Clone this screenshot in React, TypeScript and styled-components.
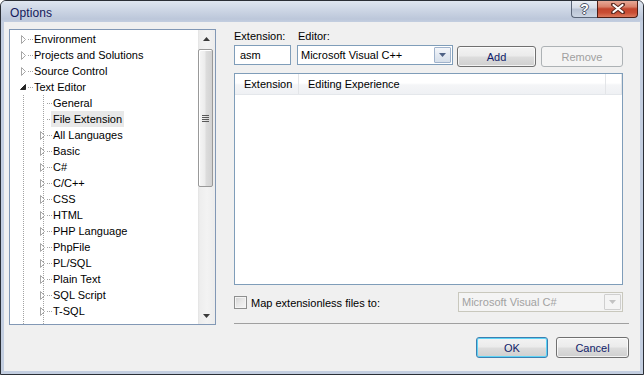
import React from 'react';
import styled, { createGlobalStyle, css } from 'styled-components';

const GlobalStyle = createGlobalStyle`
  html, body {
    margin: 0;
    padding: 0;
    background: #ffffff;
  }
  body {
    font-family: 'Liberation Sans', Arial, sans-serif;
    font-size: 11px;
    color: #000;
  }
`;

const Window = styled.div`
  width: 644px;
  height: 375px;
  box-sizing: border-box;
  border: 1px solid #2b2f36;
  border-radius: 6px 6px 0 0;
  background: #c3cee0;
  display: flex;
  flex-direction: column;
  overflow: hidden;
`;

const TitleBar = styled.div`
  height: 21px;
  display: flex;
  align-items: flex-start;
  background: linear-gradient(to bottom, #dfe6f0 0, #cdd6e5 9px, #bcc7da 18px, #c3cee0 21px);
`;

const Title = styled.span`
  padding: 5px 0 0 9px;
  font-size: 12px;
  color: #14195a;
  letter-spacing: 0.1px;
`;

const CaptionButtons = styled.div`
  margin-left: auto;
  margin-right: 5px;
  margin-top: -1px;
  display: flex;
`;

const HelpButton = styled.div`
  width: 26px;
  height: 18px;
  box-sizing: border-box;
  border: 1px solid #5a6577;
  border-top: none;
  border-right: none;
  border-radius: 0 0 0 4px;
  background: linear-gradient(to bottom, #eef1f6 0, #d6dce7 45%, #b9c3d4 55%, #ccd5e3 100%);
  display: flex;
  align-items: center;
  justify-content: center;
  font: bold 14px 'Liberation Sans', Arial, sans-serif;
  color: #ffffff;
  text-shadow: -1px 0 #4d5566, 1px 0 #4d5566, 0 -1px #4d5566, 0 1px #4d5566;
`;

const CloseButton = styled.div`
  width: 41px;
  height: 18px;
  box-sizing: border-box;
  border: 1px solid #4e1d14;
  border-top: none;
  border-radius: 0 0 4px 0;
  background: linear-gradient(to bottom, #e9b09f 0, #d9816a 40%, #c2452d 52%, #c94d34 75%, #dc7a5e 100%);
  display: flex;
  align-items: center;
  justify-content: center;
`;

const Body = styled.div`
  flex: 1;
  margin: 0 3px 3px 3px;
  background: #f0f0f0;
  display: flex;
  align-items: flex-start;
  padding: 7px 0 0 5px;
`;

/* ---------- tree ---------- */

const TreePanel = styled.div`
  width: 207px;
  height: 296px;
  box-sizing: border-box;
  border: 1px solid #8298b5;
  background: #ffffff;
  display: flex;
`;

const TreeList = styled.div`
  flex: 1;
  display: flex;
  flex-direction: column;
  padding-top: 1px;
  overflow: hidden;
`;

const dots = 'repeating-linear-gradient(to bottom, #a3a3a3 0 1px, transparent 1px 2px)';

const guideLines = css`
  background-image: ${dots}, ${dots};
  background-size: 1px 100%, 1px 100%;
  background-position: 13px 0, 33px 0;
  background-repeat: no-repeat;
`;

const TreeRow = styled.div<{ $level: number }>`
  height: 16px;
  flex-shrink: 0;
  display: flex;
  align-items: center;
  padding-left: ${(p) => (p.$level === 1 ? 11 : 30)}px;
  white-space: nowrap;
  ${(p) => p.$level === 2 && guideLines}
`;

const GuideFill = styled.div`
  flex: 1;
  ${guideLines}
`;

const ExpanderSlot = styled.span<{ $leaf?: boolean }>`
  width: 5px;
  height: 9px;
  margin-right: 1px;
  display: flex;
  align-items: center;
  justify-content: flex-start;
  ${(p) =>
    p.$leaf &&
    css`
      background: repeating-linear-gradient(to right, #a3a3a3 0 1px, transparent 1px 2px) 3px 4px / 3px 1px no-repeat;
    `}
`;

const Connector = styled.span`
  width: 6px;
  height: 1px;
  margin-right: 1px;
  background: repeating-linear-gradient(to right, transparent 0 1px, #a3a3a3 1px 2px);
`;

const NodeLabel = styled.span<{ $selected?: boolean }>`
  height: 16px;
  line-height: 16px;
  padding: 0 2px;
  margin-left: -2px;
  background: ${(p) => (p.$selected ? '#e8e8e8' : 'transparent')};
`;

const ScrollBar = styled.div`
  width: 17px;
  display: flex;
  flex-direction: column;
  background: linear-gradient(to right, #e3e3e3 0, #eeeeee 2px, #f3f3f3 9px, #ececec 100%);
`;

const ScrollArrow = styled.div`
  height: 17px;
  flex-shrink: 0;
  display: flex;
  align-items: center;
  justify-content: center;
`;

const ScrollTrack = styled.div`
  flex: 1;
  display: flex;
  flex-direction: column;
`;

const Thumb = styled.div`
  margin: 2px 2px 0 0;
  height: 138px;
  box-sizing: border-box;
  border: 1px solid #999999;
  border-radius: 2px;
  background: linear-gradient(to right, #f6f6f6 0, #ececec 45%, #dcdcdc 55%, #d2d2d2 100%);
  box-shadow: inset 1px 1px 0 #ffffff;
  display: flex;
  align-items: center;
  justify-content: center;
`;

/* ---------- right side ---------- */

const RightColumn = styled.div`
  margin-left: 18px;
  margin-top: -1px;
  width: 395px;
  display: flex;
  flex-direction: column;
`;

const LabelRow = styled.div`
  height: 16px;
  display: flex;
  align-items: center;
`;

const FieldLabel = styled.span<{ $width?: number }>`
  width: ${(p) => (p.$width ? `${p.$width}px` : 'auto')};
`;

const FieldRow = styled.div`
  margin-top: 1px;
  height: 22px;
  display: flex;
  align-items: flex-start;
`;

const TextBox = styled.div`
  width: 57px;
  height: 20px;
  box-sizing: border-box;
  border: 1px solid #7f9db9;
  background: #ffffff;
  padding-left: 5px;
  display: flex;
  align-items: center;
`;

const Combo = styled.div<{ $disabled?: boolean; $width: number }>`
  width: ${(p) => p.$width}px;
  height: 20px;
  box-sizing: border-box;
  border: 1px solid ${(p) => (p.$disabled ? '#c9c8bd' : '#7f9db9')};
  background: ${(p) => (p.$disabled ? '#f4f4f4' : '#ffffff')};
  color: ${(p) => (p.$disabled ? '#a2a2a2' : '#000000')};
  display: flex;
  align-items: center;
  padding-left: 3px;
`;

const DropButton = styled.span<{ $disabled?: boolean }>`
  margin-left: auto;
  margin-right: 1px;
  width: 17px;
  height: 16px;
  box-sizing: border-box;
  border: 1px solid ${(p) => (p.$disabled ? '#cfcfcf' : '#9fb2cb')};
  border-radius: 1px;
  background: ${(p) =>
    p.$disabled ? '#f4f4f4' : 'linear-gradient(to bottom, #f4f6fa 0, #e3e9f1 50%, #d6dfea 100%)'};
  display: flex;
  align-items: center;
  justify-content: center;
`;

const PushButton = styled.button<{ $focused?: boolean; $width: number }>`
  width: ${(p) => p.$width}px;
  height: 21px;
  box-sizing: border-box;
  padding: 0;
  border-radius: 3px;
  font: 11px 'Liberation Sans', Arial, sans-serif;
  border: 1px solid ${(p) => (p.$focused ? '#3c7fb1' : '#707070')};
  color: #101c6a;
  background: linear-gradient(to bottom, #f3f3f3 0, #ebebeb 48%, #dddddd 52%, #cfcfcf 100%);
  box-shadow: inset 0 0 0 1px ${(p) => (p.$focused ? '#5ed4f6' : 'rgba(255,255,255,0.75)')};

  &:disabled {
    border-color: #adb2b5;
    background: #f4f4f4;
    box-shadow: none;
    color: #a0a0a0;
  }
`;

const ListView = styled.div`
  margin-top: 6px;
  width: 389px;
  height: 212px;
  box-sizing: border-box;
  border: 1px solid #7f9db9;
  background: #ffffff;
`;

const ListHeader = styled.div`
  height: 21px;
  display: flex;
  background: linear-gradient(to bottom, #ffffff 0, #ffffff 45%, #f4f5f7 55%, #eff1f4 100%);
  border-bottom: 1px solid #e4e7eb;
  box-sizing: border-box;
`;

const HeaderCell = styled.div<{ $width?: number }>`
  width: ${(p) => (p.$width ? `${p.$width}px` : 'auto')};
  flex: ${(p) => (p.$width ? '0 0 auto' : '1')};
  box-sizing: border-box;
  padding-left: 9px;
  display: flex;
  align-items: center;
  border-right: 1px solid #e3e5e8;
`;

const CheckRow = styled.div`
  margin-top: 7px;
  width: 389px;
  height: 20px;
  display: flex;
  align-items: center;
  justify-content: space-between;
`;

const CheckLabel = styled.label`
  display: flex;
  align-items: center;
  gap: 4px;
  margin-top: 1px;
`;

const CheckBox = styled.span`
  width: 13px;
  height: 13px;
  box-sizing: border-box;
  border: 1px solid #8e8f8f;
  background: linear-gradient(135deg, #d2d2d2 0, #e8e8e8 50%, #f6f6f6 100%);
  box-shadow: inset 0 0 0 1px #f4f4f4;
`;

const Separator = styled.div`
  margin-top: 11px;
  height: 1px;
  background: #a0a0a0;
`;

const ButtonRow = styled.div`
  margin-top: 13px;
  display: flex;
  justify-content: flex-end;
  gap: 8px;
`;

/* ---------- icons ---------- */

const Collapsed = () => (
  <svg width="5" height="9" viewBox="0 0 5 9">
    <path d="M0.5 0.5 L4.5 4.5 L0.5 8.5 Z" fill="#ffffff" stroke="#a6a6a6" />
  </svg>
);

const Expanded = () => (
  <svg width="6" height="6" viewBox="0 0 6 6" style={{ marginLeft: -1 }}>
    <path d="M5.5 0.5 V5.5 H0.5 Z" fill="#262626" stroke="#262626" />
  </svg>
);

const SmallArrow = ({ up, color }: { up?: boolean; color: string }) => (
  <svg width="7" height="4" viewBox="0 0 7 4">
    <path d={up ? 'M0 4 L3.5 0 L7 4 Z' : 'M0 0 L7 0 L3.5 4 Z'} fill={color} />
  </svg>
);

const Grip = () => (
  <svg width="7" height="7" viewBox="0 0 7 7">
    <path d="M0 0.5 H7 M0 2.5 H7 M0 4.5 H7 M0 6.5 H7" stroke="#5a5a5a" strokeWidth="1" />
  </svg>
);

const CloseGlyph = () => (
  <svg width="14" height="11" viewBox="0 0 14 11">
    <path d="M2 1.5 L12 9.5 M12 1.5 L2 9.5" stroke="#5b2a22" strokeWidth="4" strokeLinecap="round" />
    <path d="M2.5 2 L11.5 9 M11.5 2 L2.5 9" stroke="#ffffff" strokeWidth="2.2" strokeLinecap="round" />
  </svg>
);

/* ---------- data ---------- */

type Node = {
  label: string;
  level: 1 | 2;
  state: 'collapsed' | 'expanded' | 'leaf';
  selected?: boolean;
};

const nodes: Node[] = [
  { label: 'Environment', level: 1, state: 'collapsed' },
  { label: 'Projects and Solutions', level: 1, state: 'collapsed' },
  { label: 'Source Control', level: 1, state: 'collapsed' },
  { label: 'Text Editor', level: 1, state: 'expanded' },
  { label: 'General', level: 2, state: 'leaf' },
  { label: 'File Extension', level: 2, state: 'leaf', selected: true },
  { label: 'All Languages', level: 2, state: 'collapsed' },
  { label: 'Basic', level: 2, state: 'collapsed' },
  { label: 'C#', level: 2, state: 'collapsed' },
  { label: 'C/C++', level: 2, state: 'collapsed' },
  { label: 'CSS', level: 2, state: 'collapsed' },
  { label: 'HTML', level: 2, state: 'collapsed' },
  { label: 'PHP Language', level: 2, state: 'collapsed' },
  { label: 'PhpFile', level: 2, state: 'collapsed' },
  { label: 'PL/SQL', level: 2, state: 'collapsed' },
  { label: 'Plain Text', level: 2, state: 'collapsed' },
  { label: 'SQL Script', level: 2, state: 'collapsed' },
  { label: 'T-SQL', level: 2, state: 'collapsed' },
];

const App: React.FC = () => (
  <>
    <GlobalStyle />
    <Window>
      <TitleBar>
        <Title>Options</Title>
        <CaptionButtons>
          <HelpButton>?</HelpButton>
          <CloseButton>
            <CloseGlyph />
          </CloseButton>
        </CaptionButtons>
      </TitleBar>
      <Body>
        <TreePanel>
          <TreeList>
            {nodes.map((n) => (
              <TreeRow key={n.label} $level={n.level}>
                <ExpanderSlot $leaf={n.state === 'leaf'}>
                  {n.state === 'collapsed' && <Collapsed />}
                  {n.state === 'expanded' && <Expanded />}
                </ExpanderSlot>
                <Connector />
                <NodeLabel $selected={n.selected}>{n.label}</NodeLabel>
              </TreeRow>
            ))}
            <GuideFill />
          </TreeList>
          <ScrollBar>
            <ScrollArrow>
              <SmallArrow up color="#3a3a3a" />
            </ScrollArrow>
            <ScrollTrack>
              <Thumb>
                <Grip />
              </Thumb>
            </ScrollTrack>
            <ScrollArrow>
              <SmallArrow color="#3a3a3a" />
            </ScrollArrow>
          </ScrollBar>
        </TreePanel>

        <RightColumn>
          <LabelRow>
            <FieldLabel $width={64}>Extension:</FieldLabel>
            <FieldLabel>Editor:</FieldLabel>
          </LabelRow>
          <FieldRow>
            <TextBox>asm</TextBox>
            <Combo $width={156} style={{ marginLeft: 6 }}>
              Microsoft Visual C++
              <DropButton>
                <SmallArrow color="#4d6185" />
              </DropButton>
            </Combo>
            <PushButton $width={79} style={{ marginLeft: 4, marginTop: 1 }}>
              Add
            </PushButton>
            <PushButton $width={82} disabled style={{ marginLeft: 5, marginTop: 1 }}>
              Remove
            </PushButton>
          </FieldRow>
          <ListView>
            <ListHeader>
              <HeaderCell $width={64}>Extension</HeaderCell>
              <HeaderCell $width={307}>Editing Experience</HeaderCell>
              <HeaderCell />
            </ListHeader>
          </ListView>
          <CheckRow>
            <CheckLabel>
              <CheckBox />
              Map extensionless files to:
            </CheckLabel>
            <Combo $width={165} $disabled>
              Microsoft Visual C#
              <DropButton $disabled>
                <SmallArrow color="#c2c2c2" />
              </DropButton>
            </Combo>
          </CheckRow>
          <Separator />
          <ButtonRow>
            <PushButton $width={72} $focused>
              OK
            </PushButton>
            <PushButton $width={73}>Cancel</PushButton>
          </ButtonRow>
        </RightColumn>
      </Body>
    </Window>
  </>
);

export default App;
